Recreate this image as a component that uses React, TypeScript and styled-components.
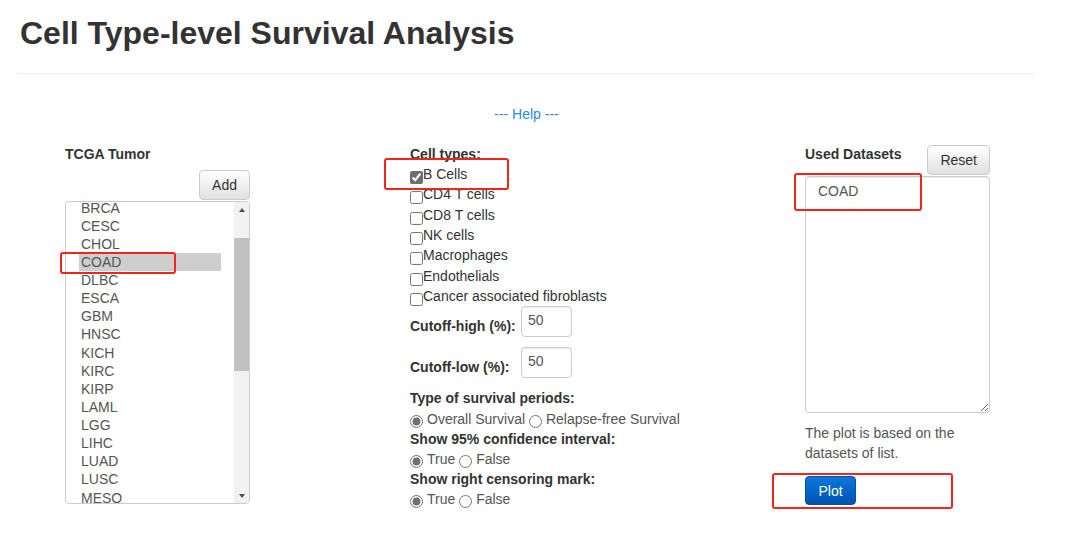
import styled, { createGlobalStyle } from 'styled-components';

// only the rows that show in the scrolled list
const tumors = [
  'BRCA', 'CESC', 'CHOL', 'COAD', 'DLBC', 'ESCA', 'GBM', 'HNSC', 'KICH',
  'KIRC', 'KIRP', 'LAML', 'LGG', 'LIHC', 'LUAD', 'LUSC', 'MESO',
];

const cellTypes = [
  'B Cells', 'CD4 T cells', 'CD8 T cells', 'NK cells', 'Macrophages',
  'Endothelials', 'Cancer associated fibroblasts',
];

const GlobalStyle = createGlobalStyle`
  body {
    margin: 0;
    background: #fff;
    color: #333;
    font-family: "Liberation Sans", Arial, sans-serif;
    font-size: 14px;
    line-height: 20px;
  }
`;

const App = () => {
  return (
    <>
      <GlobalStyle />
      <Page>
        <Title>Cell Type-level Survival Analysis</Title>
        <Rule />
        <HelpRow>
          <HelpLink href='#'>--- Help ---</HelpLink>
        </HelpRow>

        <Columns>
          {/* left: tumor picker */}
          <Column>
            <Label>TCGA Tumor</Label>
            <ButtonRow>
              <Button>Add</Button>
            </ButtonRow>
            <ListBox>
              <ListItems>
                {tumors.map((t) => (
                  <Option key={t} $selected={t === 'COAD'}>
                    {t}
                  </Option>
                ))}
              </ListItems>
              <ScrollBar>
                <ScrollArrow $up />
                <ScrollTrack>
                  <ScrollThumb />
                </ScrollTrack>
                <ScrollArrow />
              </ScrollBar>
            </ListBox>
          </Column>

          {/* middle: options */}
          <Column>
            <Label>Cell types:</Label>
            {cellTypes.map((c, i) => (
              <CheckRow key={c}>
                <CheckBox type='checkbox' defaultChecked={i === 0} />
                {c}
              </CheckRow>
            ))}
            <CutoffRow $first>
              <CutoffLabel>Cutoff-high (%):</CutoffLabel>
              <NumberInput defaultValue='50' />
            </CutoffRow>
            <CutoffRow>
              <CutoffLabel>Cutoff-low (%):</CutoffLabel>
              <NumberInput defaultValue='50' />
            </CutoffRow>
            <Options>
              <Label>Type of survival periods:</Label>
              <RadioRow>
                <Radio type='radio' name='period' defaultChecked />
                Overall Survival{' '}
                <Radio type='radio' name='period' />
                Relapse-free Survival
              </RadioRow>
              <Label>Show 95% confidence interval:</Label>
              <RadioRow>
                <Radio type='radio' name='ci' defaultChecked />
                True{' '}
                <Radio type='radio' name='ci' />
                False
              </RadioRow>
              <Label>Show right censoring mark:</Label>
              <RadioRow>
                <Radio type='radio' name='mark' defaultChecked />
                True{' '}
                <Radio type='radio' name='mark' />
                False
              </RadioRow>
            </Options>
          </Column>

          {/* right: used datasets */}
          <Column>
            <DatasetHead>
              <Label>Used Datasets</Label>
              <Button $top>Reset</Button>
            </DatasetHead>
            <DatasetArea readOnly value='COAD' />
            <Note>The plot is based on the datasets of list.</Note>
            <PlotButton>Plot</PlotButton>
          </Column>
        </Columns>

        <Marker style={{ left: 60, top: 252, width: 116, height: 22 }} />
        <Marker style={{ left: 384, top: 158, width: 125, height: 32 }} />
        <Marker style={{ left: 794, top: 173, width: 128, height: 38 }} />
        <Marker style={{ left: 772, top: 473, width: 181, height: 36 }} />
      </Page>
    </>
  );
};

const Page = styled.div`
  position: relative;
  width: 1017px;
  height: 538px;
  padding-left: 18px;
  box-sizing: content-box;
`;

const Title = styled.h1`
  margin: 0 0 0 2px;
  padding-top: 16px;
  font-size: 32px;
  line-height: 35px;
  font-weight: bold;
  color: #333;
`;

const Rule = styled.hr`
  margin: 22px 0 0;
  border: 0;
  border-top: 1px solid #eee;
`;

const HelpRow = styled.div`
  margin-top: 30px;
  text-align: center;
`;

const HelpLink = styled.a`
  color: #2c8ad6;
  text-decoration: none;
`;

const Columns = styled.div`
  display: grid;
  grid-template-columns: 345px 395px 185px;
  margin-top: 20px;
  padding-left: 47px;
`;

const Column = styled.div`
  display: flex;
  flex-direction: column;
  align-items: flex-start;
`;

const Label = styled.div`
  font-weight: bold;
  color: #333;
  line-height: 20px;
`;

const ButtonRow = styled.div`
  align-self: stretch;
  width: 185px;
  display: flex;
  justify-content: flex-end;
  margin-top: 6px;
`;

const Button = styled.button<{ $top?: boolean }>`
  height: 30px;
  padding: 0 12px;
  margin-top: ${(p) => (p.$top ? '1px' : '0')};
  font: 14px "Liberation Sans", Arial, sans-serif;
  color: #333;
  background: linear-gradient(#fff, #e0e0e0);
  border: 1px solid #ccc;
  border-radius: 4px;
`;

const ListBox = styled.div`
  display: flex;
  width: 185px;
  height: 303px;
  margin-top: 1px;
  box-sizing: border-box;
  border: 1px solid #ccc;
  border-radius: 4px;
  overflow: hidden;
`;

const ListItems = styled.div`
  flex: 1;
  overflow: hidden;
  & > :first-child {
    margin-top: -3.5px;
  }
`;

const Option = styled.div<{ $selected?: boolean }>`
  height: 18.125px;
  line-height: 18.125px;
  margin-left: 13px;
  width: 140px;
  padding-left: 2px;
  color: #555;
  background: ${(p) => (p.$selected ? '#cecece' : 'transparent')};
`;

const ScrollBar = styled.div`
  width: 15px;
  display: flex;
  flex-direction: column;
  background: #f1f1f1;
`;

const ScrollArrow = styled.div<{ $up?: boolean }>`
  height: 15px;
  display: flex;
  align-items: center;
  justify-content: center;
  &::after {
    content: '';
    border-left: 3.5px solid transparent;
    border-right: 3.5px solid transparent;
    ${(p) =>
      p.$up ? 'border-bottom: 4px solid #505050;' : 'border-top: 4px solid #505050;'}
  }
`;

const ScrollTrack = styled.div`
  flex: 1;
`;

const ScrollThumb = styled.div`
  margin-top: 21px;
  height: 133px;
  background: #c1c1c1;
`;

const CheckRow = styled.label`
  display: flex;
  align-items: center;
  height: 20.33px;
  color: #333;
`;

const CheckBox = styled.input`
  width: 13px;
  height: 13px;
  margin: 7px 0 0;
  accent-color: #6e6e6e;
`;

const CutoffRow = styled.div<{ $first?: boolean }>`
  display: flex;
  align-items: flex-start;
  margin-top: ${(p) => (p.$first ? '0' : '10px')};
`;

const CutoffLabel = styled.div`
  width: 111px;
  margin-top: 10px;
  font-weight: bold;
`;

const NumberInput = styled.input`
  width: 51px;
  height: 31px;
  box-sizing: border-box;
  padding: 0 6px 4px;
  font: 14px "Liberation Sans", Arial, sans-serif;
  color: #555;
  border: 1px solid #ccc;
  border-radius: 4px;
  box-shadow: inset 0 1px 1px rgba(0, 0, 0, 0.075);
`;

const Options = styled.div`
  margin-top: 10px;
  line-height: 20.2px;
  & > div {
    line-height: 20.2px;
  }
`;

const RadioRow = styled.div`
  height: 20.2px;
  white-space: pre;
  color: #555;
`;

const Radio = styled.input`
  width: 13px;
  height: 13px;
  margin: 0 4px 0 0;
  vertical-align: -4px;
  accent-color: #6e6e6e;
`;

const DatasetHead = styled.div`
  align-self: stretch;
  display: flex;
  justify-content: space-between;
  align-items: flex-start;
`;

const DatasetArea = styled.textarea`
  width: 185px;
  height: 237px;
  margin-top: 1px;
  box-sizing: border-box;
  padding: 4px 12px;
  font: 14px/20px "Liberation Sans", Arial, sans-serif;
  color: #555;
  border: 1px solid #ccc;
  border-radius: 4px;
  box-shadow: inset 0 1px 1px rgba(0, 0, 0, 0.075);
  resize: vertical;
`;

const Note = styled.p`
  width: 185px;
  margin: 10px 0 0;
  color: #555;
`;

const PlotButton = styled.button`
  width: 51px;
  height: 29px;
  margin-top: 13px;
  font: 14px "Liberation Sans", Arial, sans-serif;
  color: #fff;
  background: linear-gradient(#0c78dc, #0052b0);
  border: 1px solid #0050a8;
  border-radius: 4px;
`;

const Marker = styled.div`
  position: absolute;
  box-sizing: border-box;
  border: 2px solid #f0251e;
  border-radius: 3px;
  pointer-events: none;
`;

export default App;
